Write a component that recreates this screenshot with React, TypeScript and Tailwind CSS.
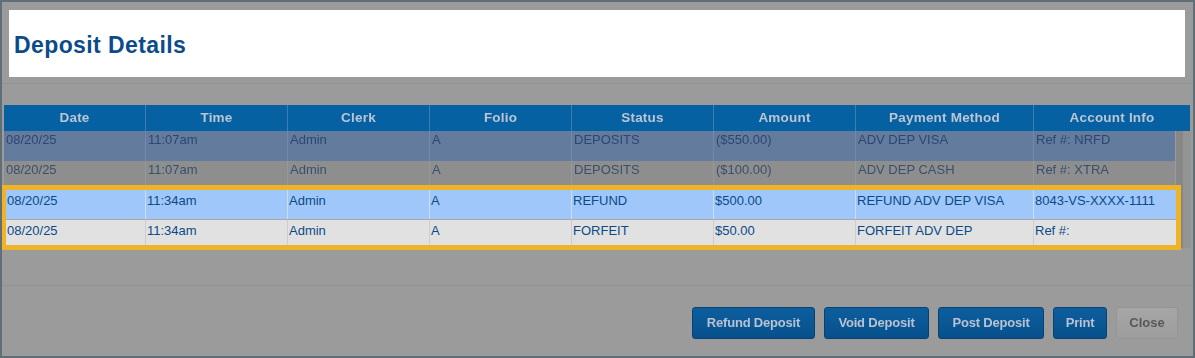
import React from "react";

const dimRows = [
  { date: "08/20/25", time: "11:07am", clerk: "Admin", folio: "A", status: "DEPOSITS", amount: "($550.00)", method: "ADV DEP VISA", info: "Ref #: NRFD" },
  { date: "08/20/25", time: "11:07am", clerk: "Admin", folio: "A", status: "DEPOSITS", amount: "($100.00)", method: "ADV DEP CASH", info: "Ref #: XTRA" },
];

const litRows = [
  { date: "08/20/25", time: "11:34am", clerk: "Admin", folio: "A", status: "REFUND", amount: "$500.00", method: "REFUND ADV DEP VISA", info: "8043-VS-XXXX-1111" },
  { date: "08/20/25", time: "11:34am", clerk: "Admin", folio: "A", status: "FORFEIT", amount: "$50.00", method: "FORFEIT ADV DEP", info: "Ref #:" },
];

const headers = ["Date", "Time", "Clerk", "Folio", "Status", "Amount", "Payment Method", "Account Info"];

type Row = (typeof dimRows)[number];

function cells(r: Row) {
  return [r.date, r.time, r.clerk, r.folio, r.status, r.amount, r.method, r.info];
}

export default function App() {
  return (
    <div
      className="relative w-[1195px] h-[358px] overflow-hidden border-2 border-[#5f6e77] bg-[#9b9b9b] text-[13px]"
      style={{ fontFamily: '"Liberation Sans", Arial, sans-serif' }}
    >
      {/* highlighted title */}
      <div className="ml-[7px] mt-[8px] flex h-[67px] w-[1176px] items-center bg-white pl-[5px] pt-[3px]">
        <h1 className="text-[23px] font-bold leading-none tracking-[0.4px] text-[#0b4b8b]">Deposit Details</h1>
      </div>
      <div className="mt-[6px] h-px bg-[#939393]" />

      {/* table */}
      <div className="relative mt-[21px]">
        <div className="ml-[2px] grid h-[26px] w-[1186px] grid-cols-[141px_142px_142px_142px_142px_142px_178px_157px] bg-[#0561a1] blur-[0.6px]">
          {headers.map((h, i) => (
            <div
              key={h}
              className={`flex items-center justify-center text-[13.5px] font-bold tracking-[0.2px] text-[#bcc5d4] ${i > 0 ? "border-l border-[#3f7cb6]" : ""}`}
            >
              {h}
            </div>
          ))}
        </div>

        {/* scrollbar */}
        <div className="absolute left-[1174px] top-[26px] h-[117px] w-[7px] bg-[#878787]" />
        <div className="absolute left-[1181px] top-[26px] h-[117px] w-[8px] bg-[#949494]" />

        <div className="blur-[0.5px]">
          {dimRows.map((r, ri) => (
            <div
              key={ri}
              className={`ml-[2px] grid w-[1171px] grid-cols-[141px_142px_142px_142px_142px_142px_178px_142px] leading-[16px] ${
                ri === 0 ? "h-[30px] bg-[#637b9d] text-[#2c4770]" : "h-[24px] bg-[#8e8e8e] text-[#38506f]"
              }`}
            >
              {cells(r).map((c, i) => (
                <div
                  key={i}
                  className={`pl-[2px] pt-[1px] ${i > 0 ? (ri === 0 ? "border-l border-[#7489a8]" : "border-l border-[#989898]") : ""}`}
                >
                  {c}
                </div>
              ))}
            </div>
          ))}
        </div>

        {/* highlighted rows */}
        <div className="relative w-[1179px] border-[5px] border-l-[4px] border-[#efb328]">
          {litRows.map((r, ri) => (
            <div
              key={ri}
              className={`grid grid-cols-[139px_142px_142px_142px_142px_142px_178px_143px] leading-[16px] text-[#0b4a88] ${
                ri === 0 ? "h-[30px] border-b border-[#a9a9a9] bg-[#9fc7fa]" : "h-[25px] bg-[#e1e1e1]"
              }`}
            >
              {cells(r).map((c, i) => (
                <div
                  key={i}
                  className={`pl-[1px] pt-[3px] ${i > 0 ? (ri === 0 ? "border-l border-[#c9ddf7]" : "border-l border-[#cdcdcd]") : ""}`}
                >
                  {c}
                </div>
              ))}
            </div>
          ))}
        </div>
      </div>

      <div className="mt-[35px] h-px bg-[#919191]" />

      {/* footer */}
      <div className="mt-[21px] flex justify-end gap-[9px] pr-[15px] blur-[0.6px]">
        {[
          ["Refund Deposit", "w-[123px]"],
          ["Void Deposit", "w-[105px]"],
          ["Post Deposit", "w-[106px]"],
          ["Print", "w-[54px]"],
        ].map(([t, w]) => (
          <button
            key={t}
            className={`${w} h-[32px] rounded-[3px] border border-[#064275] bg-gradient-to-b from-[#0d5e9e] to-[#07508c] text-[13px] font-bold tracking-[-0.2px] text-[#b7c2d2]`}
          >
            {t}
          </button>
        ))}
        <button className="h-[32px] w-[62px] rounded-[3px] border border-[#959595] bg-gradient-to-b from-[#a6a6a6] to-[#9d9d9d] text-[13px] font-bold text-[#585858]">
          Close
        </button>
      </div>
    </div>
  );
}
